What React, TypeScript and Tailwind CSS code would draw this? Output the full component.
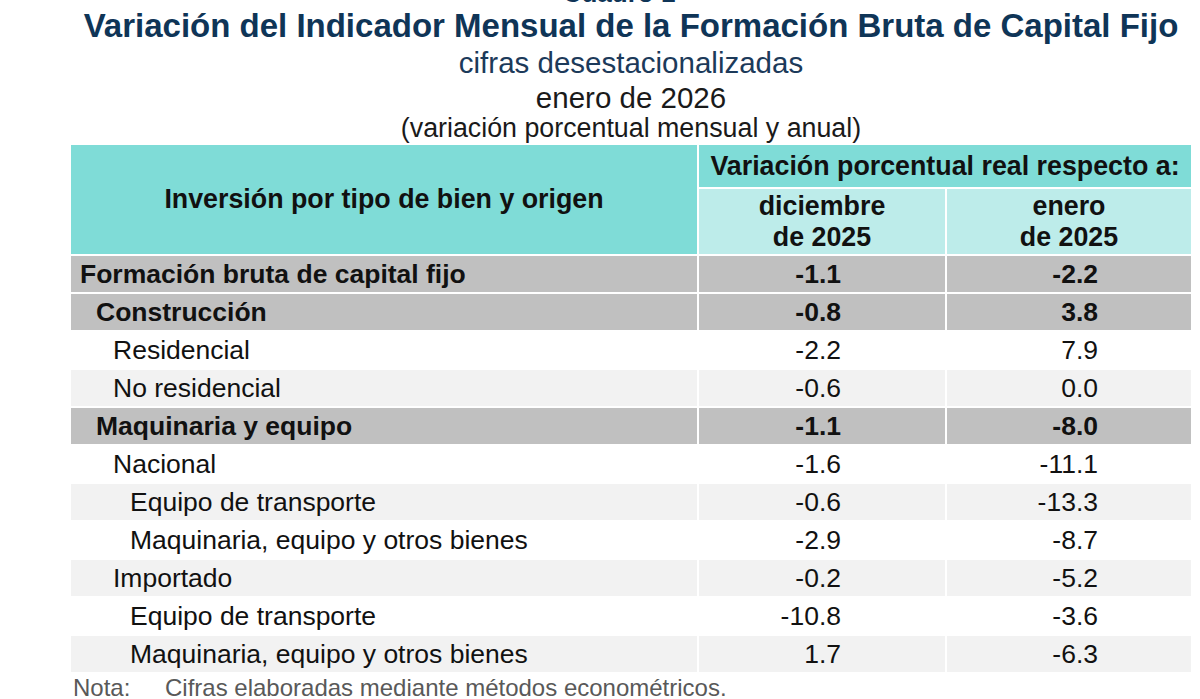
import React from "react";

type Row = {
  label: string;
  level: 0 | 1 | 2 | 3;
  kind: "total" | "white" | "light";
  a: string;
  b: string;
};

const rows: Row[] = [
  { label: "Formación bruta de capital fijo", level: 0, kind: "total", a: "-1.1", b: "-2.2" },
  { label: "Construcción", level: 1, kind: "total", a: "-0.8", b: "3.8" },
  { label: "Residencial", level: 2, kind: "white", a: "-2.2", b: "7.9" },
  { label: "No residencial", level: 2, kind: "light", a: "-0.6", b: "0.0" },
  { label: "Maquinaria y equipo", level: 1, kind: "total", a: "-1.1", b: "-8.0" },
  { label: "Nacional", level: 2, kind: "white", a: "-1.6", b: "-11.1" },
  { label: "Equipo de transporte", level: 3, kind: "light", a: "-0.6", b: "-13.3" },
  { label: "Maquinaria, equipo y otros bienes", level: 3, kind: "white", a: "-2.9", b: "-8.7" },
  { label: "Importado", level: 2, kind: "light", a: "-0.2", b: "-5.2" },
  { label: "Equipo de transporte", level: 3, kind: "white", a: "-10.8", b: "-3.6" },
  { label: "Maquinaria, equipo y otros bienes", level: 3, kind: "light", a: "1.7", b: "-6.3" },
];

const padFor = ["pl-[9px]", "pl-[25px]", "pl-[42px]", "pl-[59px]"];
const bgFor = { total: "bg-[#c0c0c0]", white: "bg-white", light: "bg-[#f2f2f2]" };

export default function App() {
  return (
    <div
      className="w-[1200px] h-[699px] overflow-hidden bg-white pl-[71px]"
      style={{ fontFamily: '"Liberation Sans", Arial, sans-serif' }}
    >
      <div className="w-[1120px]">
        <div className="h-[3px] overflow-hidden flex justify-center">
          <div className="-mt-[20px] text-[26px] leading-[26px] font-bold text-[#0f3557] pr-[24px]">Cuadro 1</div>
        </div>
        <div className="mt-[4px] text-center text-[33px] leading-[38px] font-bold text-[#0f3557] whitespace-nowrap">
          Variación del Indicador Mensual de la Formación Bruta de Capital Fijo
        </div>
        <div className="text-center text-[29.5px] leading-[36px] text-[#1c3a5a]">cifras desestacionalizadas</div>
        <div className="-mt-[1px] text-center text-[29.5px] leading-[36px] text-[#1a1a1a]">enero de 2026</div>
        <div className="mt-[1px] text-center text-[26.8px] leading-[22px] text-[#1a1a1a]">(variación porcentual mensual y anual)</div>

        <div className="mt-[6px] grid grid-cols-[626px_246px_244px] gap-[2px] bg-white">
          <div className="row-span-2 bg-[#7fdcd7] flex items-center justify-center text-[26.8px] font-bold text-[#111]">
            Inversión por tipo de bien y origen
          </div>
          <div className="col-span-2 h-[42px] bg-[#7fdcd7] flex items-center justify-center text-[26.8px] font-bold text-[#111] whitespace-nowrap">
            Variación porcentual real respecto a:
          </div>
          <div className="h-[65px] bg-[#bdecea] flex flex-col items-center justify-center text-[26.8px] leading-[31px] font-bold text-[#111]">
            <span>diciembre</span>
            <span>de 2025</span>
          </div>
          <div className="h-[65px] bg-[#bdecea] flex flex-col items-center justify-center text-[26.8px] leading-[31px] font-bold text-[#111]">
            <span>enero</span>
            <span>de 2025</span>
          </div>

          {rows.map((r, i) => {
            const bold = r.kind === "total" ? "font-bold" : "font-normal";
            const bg = bgFor[r.kind];
            return (
              <React.Fragment key={i}>
                <div className={`h-[36px] ${bg} ${padFor[r.level]} flex items-center text-[26.5px] leading-[36px] text-[#111] ${bold} whitespace-nowrap`}>
                  {r.label}
                </div>
                <div className={`h-[36px] ${bg} pr-[104px] flex items-center justify-end text-[26.5px] leading-[36px] text-[#111] ${bold}`}>
                  {r.a}
                </div>
                <div className={`h-[36px] ${bg} pr-[93px] flex items-center justify-end text-[26.5px] leading-[36px] text-[#111] ${bold}`}>
                  {r.b}
                </div>
              </React.Fragment>
            );
          })}
        </div>

        <div className="mt-[2px] flex pl-[2px] text-[24px] leading-[28px] text-[#595959] whitespace-nowrap">
          <span className="w-[92px] shrink-0">Nota:</span>
          <span>Cifras elaboradas mediante métodos econométricos.</span>
        </div>
      </div>
    </div>
  );
}
